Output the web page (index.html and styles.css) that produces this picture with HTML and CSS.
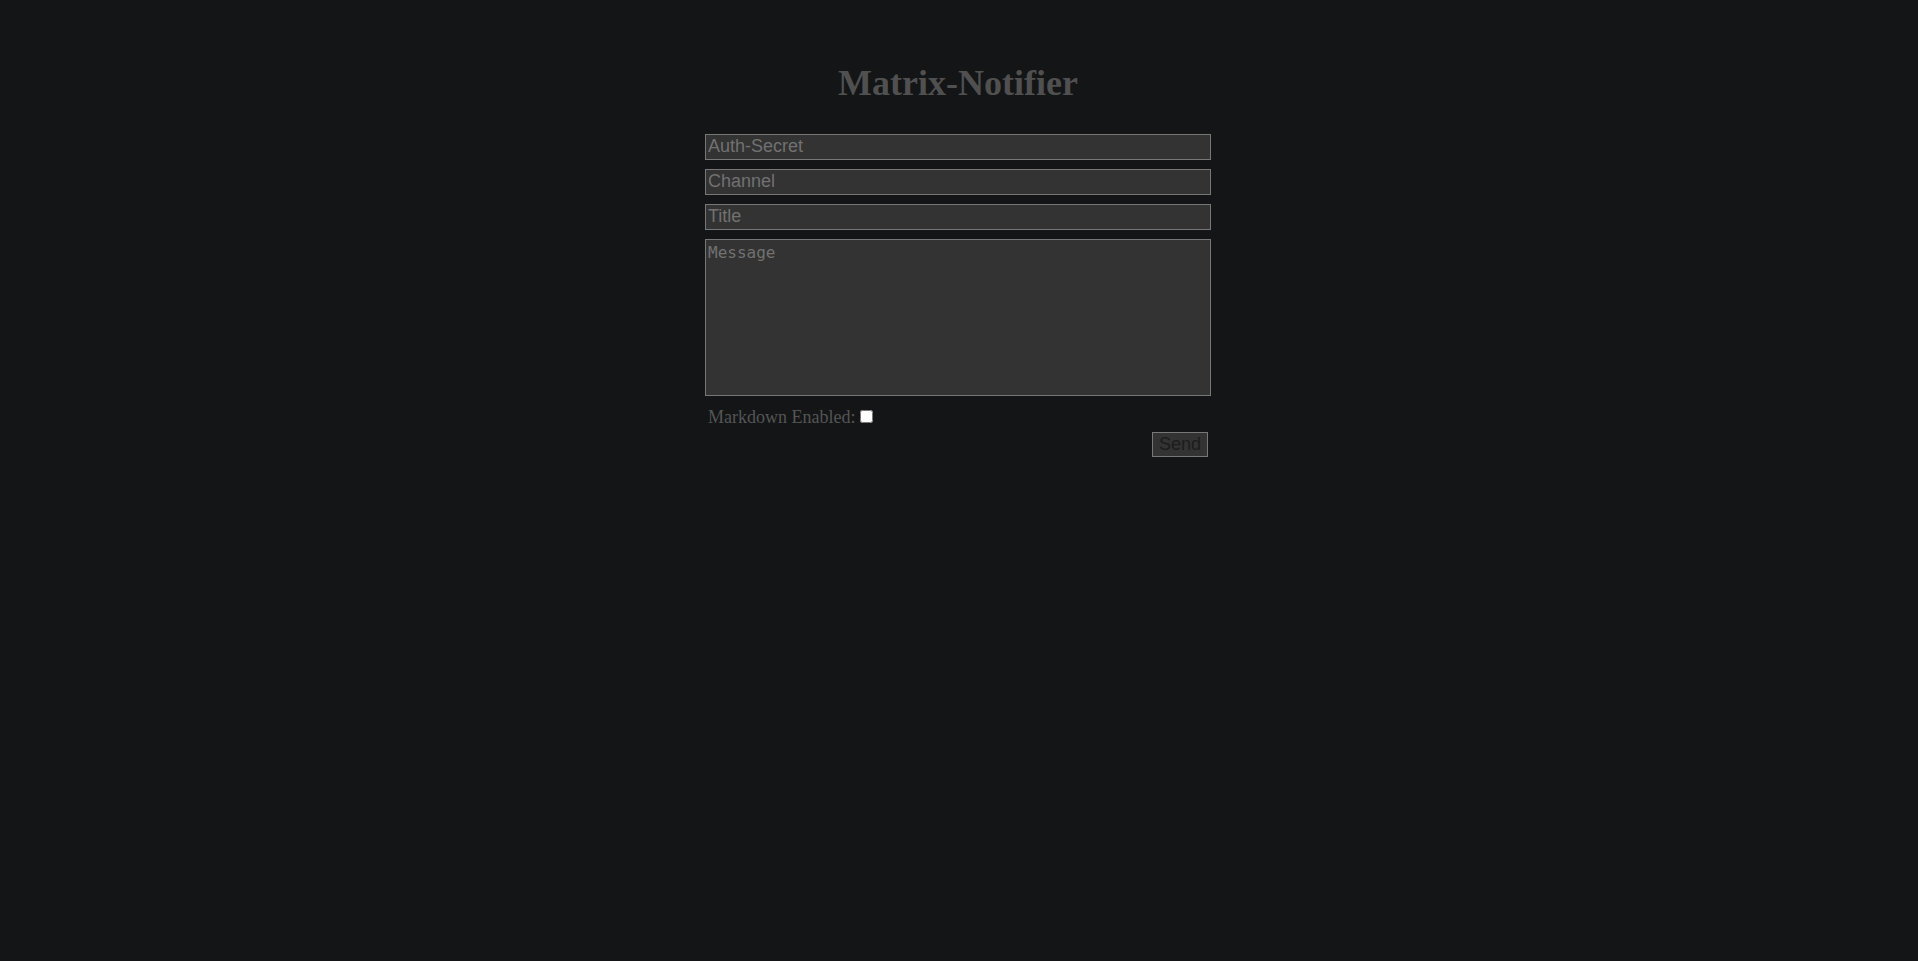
FILE: index.html
```html
<!DOCTYPE html>
<html lang="en">
<head>
<meta charset="utf-8">
<title>Matrix-Notifier</title>
<link rel="stylesheet" href="styles.css">
</head>
<body>
<main class="page">
  <h1 class="title">Matrix-Notifier</h1>
  <form class="form">
    <input class="field" type="text" placeholder="Auth-Secret">
    <input class="field" type="text" placeholder="Channel">
    <input class="field" type="text" placeholder="Title">
    <textarea class="message" placeholder="Message"></textarea>
    <div class="options">
      <label class="md-label">Markdown Enabled: <input class="check" type="checkbox"></label>
      <div class="actions">
        <button class="send" type="button">Send</button>
      </div>
    </div>
  </form>
</main>
</body>
</html>
```

FILE: styles.css
```css
html, body {
  margin: 0;
  padding: 0;
  background: #141517;
  height: 100%;
}

.page {
  width: 506px;
  margin: 0 auto;
  padding: 63px 2px 0 0;
  font-family: "Liberation Serif", "Times New Roman", serif;
  font-size: 18px;
  color: #555555;
}

.title {
  margin: 0 0 30px 0;
  font-size: 36px;
  line-height: 41px;
  font-weight: bold;
  text-align: center;
  color: #505050;
}

.form {
  display: flex;
  flex-direction: column;
  gap: 9px;
}

.field,
.message {
  box-sizing: border-box;
  width: 100%;
  margin: 0;
  background: #333333;
  border: 1px solid #777777;
  color: #aaaaaa;
  outline: none;
}

.field {
  height: 26px;
  padding: 0 2px 2px 2px;
  font-family: "Liberation Sans", Arial, sans-serif;
  font-size: 18px;
}

.message {
  height: 157px;
  padding: 3px 2px;
  font-family: "DejaVu Sans Mono", "Liberation Mono", monospace;
  font-size: 16px;
  resize: none;
}

.field::placeholder,
.message::placeholder {
  color: #717171;
}

.options {
  display: flex;
  flex-direction: column;
  gap: 4px;
  padding: 0 3px;
  margin-top: 2px;
}

.md-label {
  display: flex;
  align-items: center;
  line-height: 21px;
  color: #555555;
  white-space: pre;
}

.check {
  width: 13px;
  height: 13px;
  margin: 0 0 2px 0;
}

.actions {
  display: flex;
  justify-content: flex-end;
}

.send {
  box-sizing: border-box;
  height: 25px;
  padding: 0 6px;
  background: #333333;
  border: 1px solid #777777;
  color: #1c1c1c;
  font-family: "Liberation Sans", Arial, sans-serif;
  font-size: 18px;
  line-height: 21px;
}
```
